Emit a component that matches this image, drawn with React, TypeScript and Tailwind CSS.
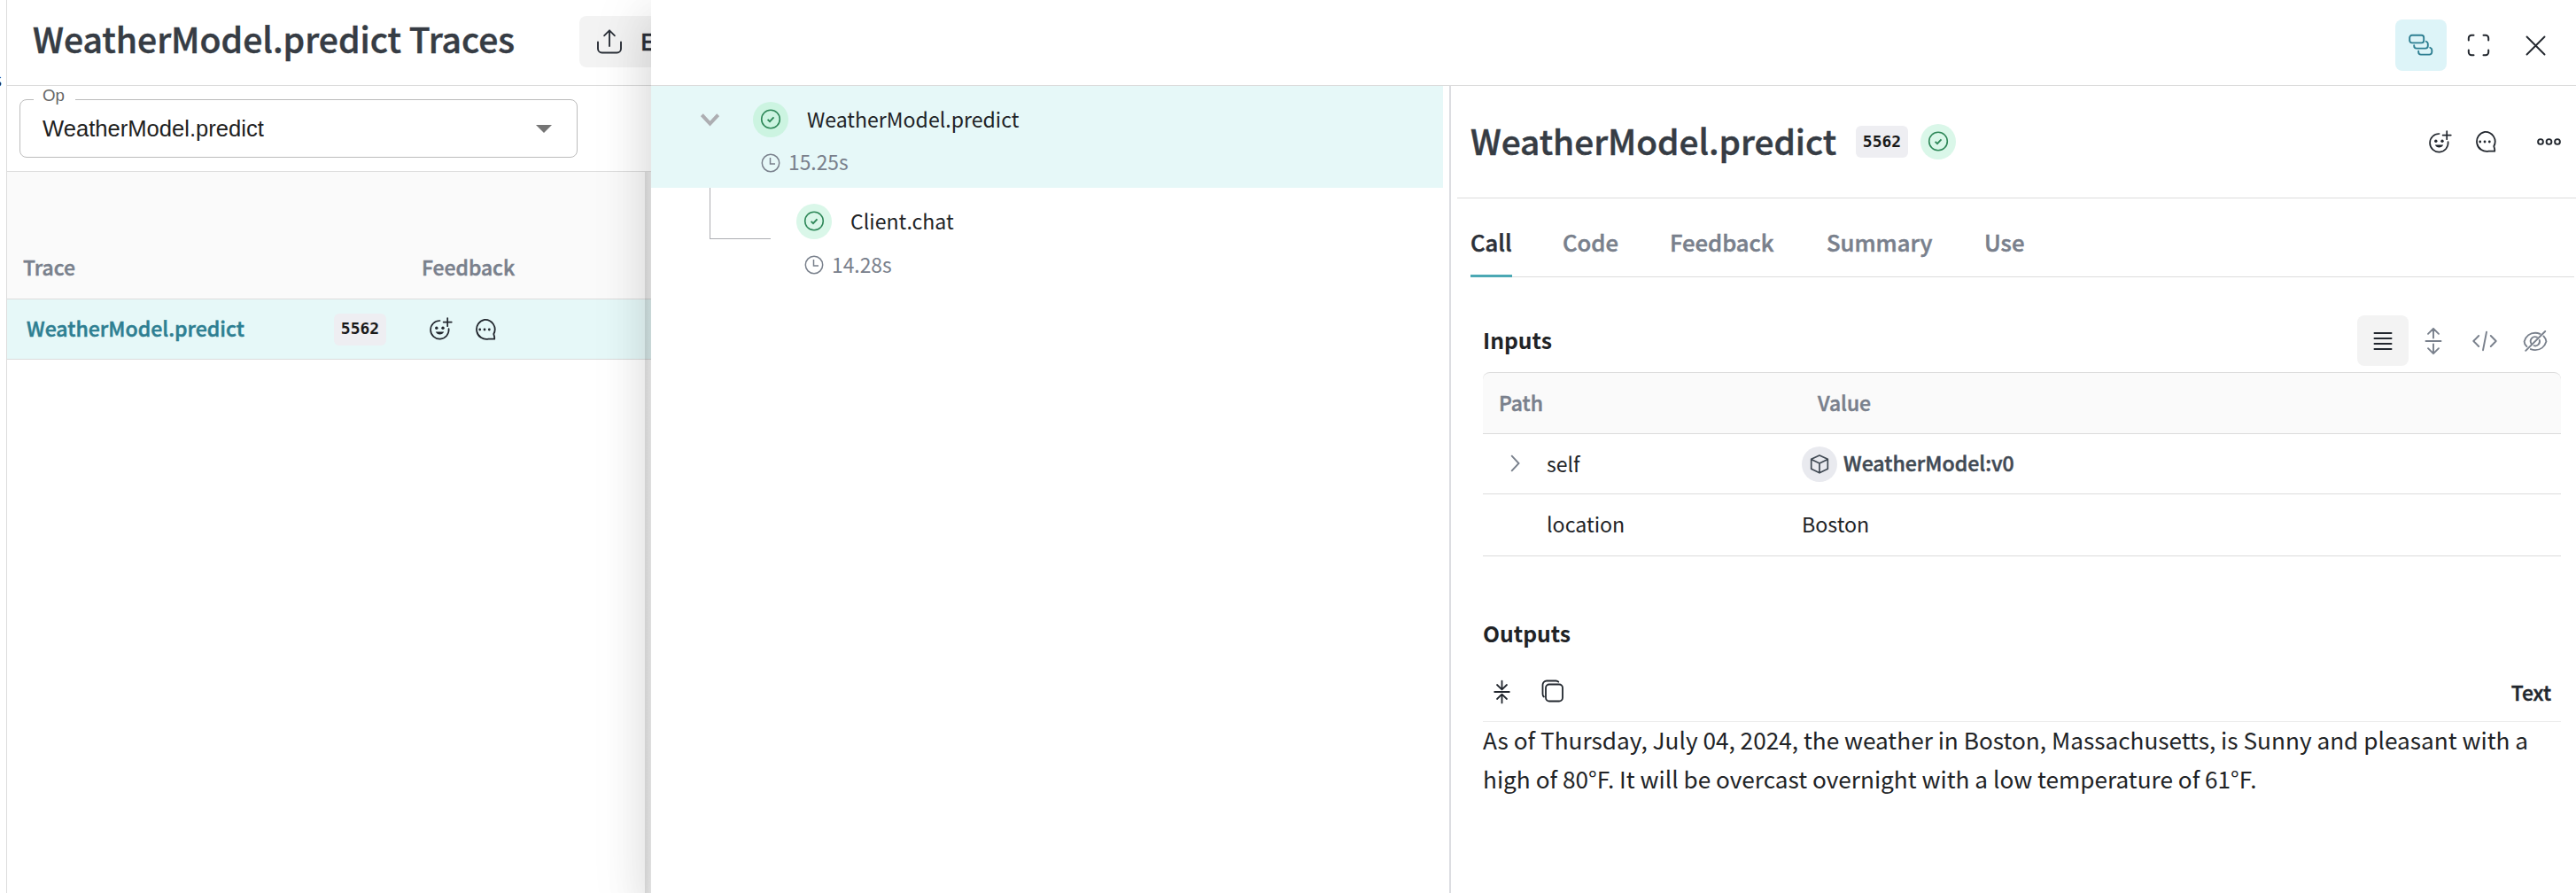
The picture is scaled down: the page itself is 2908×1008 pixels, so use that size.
import React from "react";

type IconProps = { className?: string };

const SANS = "font-['Noto_Sans_CJK_SC','Noto_Sans',sans-serif]";
const SEMI = "font-medium [-webkit-text-stroke:0.5px_currentColor]";

function SmilePlus({ className }: IconProps) {
  return (
    <svg className={className} width="26" height="26" viewBox="0 0 26 26" fill="none" stroke="currentColor" strokeWidth="1.7" strokeLinecap="round">
      <path d="M11.6 4A10.3 10.3 0 1 0 21.6 13.2" />
      <path d="M20.2 1v9.2M15.6 5.6h9.2" />
      <circle cx="7.8" cy="12.2" r="1.7" fill="currentColor" stroke="none" />
      <circle cx="15" cy="12.2" r="1.7" fill="currentColor" stroke="none" />
      <path d="M6.8 16.6h9.4c-.9 2-2.6 3-4.7 3s-3.8-1-4.7-3z" fill="currentColor" stroke="none" />
    </svg>
  );
}

function Chat({ className }: IconProps) {
  return (
    <svg className={className} width="26" height="26" viewBox="0 0 26 26" fill="none" stroke="currentColor" strokeWidth="1.8" strokeLinejoin="round">
      <path d="M13 1.8A11 11 0 1 0 17.4 23.7H24.2V21.5L23.3 18A11 11 0 0 0 13 1.8z" />
      <g fill="currentColor" stroke="none">
        <circle cx="7.7" cy="13" r="1.4" />
        <circle cx="13" cy="13" r="1.4" />
        <circle cx="18.3" cy="13" r="1.4" />
      </g>
    </svg>
  );
}

function Status({ className = "" }: IconProps) {
  return (
    <span className={`flex size-10 shrink-0 items-center justify-center rounded-full text-[#2f8859] ${className}`}>
      <svg width="24" height="24" viewBox="0 0 24 24" fill="none" stroke="currentColor" strokeWidth="1.6">
        <circle cx="12" cy="11.5" r="10.3" />
        <path d="M8.6 11.8l2.4 2.4 4.5-4.9" strokeWidth="1.9" />
      </svg>
    </span>
  );
}

function Clock() {
  return (
    <svg width="22" height="22" viewBox="0 0 22 22" fill="none" stroke="currentColor" strokeWidth="1.5">
      <circle cx="11" cy="11" r="9.7" />
      <path d="M10.5 5v7h5.5" />
    </svg>
  );
}

function Badge() {
  return (
    <span className="flex h-9 w-[59px] shrink-0 items-center justify-center rounded-md bg-[#eeeef2] pb-px font-['DejaVu_Sans_Mono',monospace] text-[18px] leading-none font-bold text-[#1a1a1a]">
      5562
    </span>
  );
}

function TracesPage() {
  return (
    <div className="flex w-[735px] shrink-0 overflow-hidden">
      <div className="flex w-[7px] shrink-0 justify-end overflow-hidden pt-[72px] pr-[5px] text-[22px] leading-8">s</div>
      <main className="flex w-[728px] shrink-0 flex-col border-l border-[#dcdcdc]">
        <header className="flex h-[97px] shrink-0 items-start border-b border-[#dcdcdc] pl-[29px]">
          <h1 className={`mt-[15px] w-[617px] shrink-0 text-[39.1px] leading-[56px] whitespace-nowrap text-[#363c44] ${SEMI}`}>
            WeatherModel.predict Traces
          </h1>
          <button className="mt-[18px] flex h-[58px] w-[180px] shrink-0 items-center rounded-lg bg-[#f3f3f3] pl-[19px] text-[#2b3038]">
            <svg width="30" height="30" viewBox="0 0 30 30" fill="none" stroke="currentColor" strokeWidth="1.9" strokeLinecap="round" strokeLinejoin="round">
              <path d="M15 20V2.5M9.2 8.2L15 2.3l5.8 5.9M2 15.5V23a4.5 4.5 0 0 0 4.5 4.5h17a4.5 4.500 0 0 0 4.5-4.5v-7.5" />
            </svg>
            <span className={`-mt-[3px] ml-5 text-[25px] leading-9 ${SEMI}`}>Export</span>
          </button>
        </header>

        <div className="h-[97px] shrink-0 border-b border-[#dcdcdc] pt-[15px] pl-[14px] font-['Liberation_Sans',sans-serif]">
          <div className="relative flex h-[66px] w-[630px] items-center justify-between rounded-lg border border-[#bcbcbc] pr-7 pl-[25px]">
            <span className="absolute -top-[16px] left-[15px] w-[47px] bg-white pl-[10px] text-[18.7px] leading-[22px] text-[#666]">Op</span>
            <span className="-mt-px text-[25.6px] leading-8 text-[#212121]">WeatherModel.predict</span>
            <svg width="18" height="9" viewBox="0 0 18 9" className="text-[#757575]">
              <path d="M0 0h18L9 9z" fill="currentColor" />
            </svg>
          </div>
        </div>

        <div className="relative flex grow flex-col">
          <div className={`flex h-[144px] shrink-0 items-start border-b border-[#dcdcdc] bg-[#fafafa] pt-[89px] pl-[18px] text-[22.9px] leading-9 text-[#79808c] ${SEMI}`}>
            <span className="w-[450px] shrink-0">Trace</span>
            <span>Feedback</span>
          </div>
          <div className="flex h-[68px] shrink-0 items-center border-b border-[#dcdcdc] bg-[#e6f8f8] pl-[22px] text-[#22272e]">
            <span className={`-mt-[3px] w-[347px] shrink-0 text-[23.1px] leading-9 text-[#2e7f92] ${SEMI}`}>WeatherModel.predict</span>
            <Badge />
            <SmilePlus className="-mt-px ml-[49px]" />
            <Chat className="ml-[23px]" />
          </div>
          <div className="absolute inset-y-0 right-0 w-[7px] bg-linear-to-r from-black/11 to-black/4" />
        </div>
      </main>
    </div>
  );
}

function CallTree() {
  return (
    <div className="w-[901px] shrink-0">
      <div className="flex h-[115px] w-[894px] bg-[#e6f8f8] pl-[56px]">
        <svg className="mt-[31px] mr-[38px] shrink-0 text-[#adaeb2]" width="21" height="15" viewBox="0 0 21 15" fill="none" stroke="currentColor" strokeWidth="4">
          <path d="M1.3 1.7l9.2 9.8 9.2-9.8" />
        </svg>
        <div>
          <div className="mt-[18px] flex h-10 items-center gap-[21px]">
            <Status className="bg-[#ccf4e1]" />
            <span className="-mt-[3px] text-[23.1px] leading-9 text-[#212326]">WeatherModel.predict</span>
          </div>
          <div className="mt-[11px] ml-[9px] flex h-9 items-center gap-[9px] text-[#79808c]">
            <Clock />
            <span className="-mt-[2px] text-[22.8px] leading-9">15.25s</span>
          </div>
        </div>
      </div>
      <div className="flex h-[115px] pl-[66px]">
        <div className="h-[58px] w-[69px] shrink-0 border-b border-l border-[#adaeb2]" />
        <div className="ml-[29px]">
          <div className="mt-[18px] flex h-10 items-center gap-[21px]">
            <Status className="bg-[#daf7e9]" />
            <span className="-mt-[3px] text-[23.1px] leading-9 text-[#212326]">Client.chat</span>
          </div>
          <div className="mt-[11px] ml-[9px] flex h-9 items-center gap-[9px] text-[#79808c]">
            <Clock />
            <span className="text-[22.8px] leading-9">14.28s</span>
          </div>
        </div>
      </div>
    </div>
  );
}

function Inputs() {
  return (
    <section className="w-[1217px]">
      <div className="flex h-[64px] items-start">
        <h2 className="mt-[9px] grow text-[24.7px] leading-9 font-bold text-[#212326]">Inputs</h2>
        <div className="flex items-center text-[#79808c]">
          <span className="flex h-[57px] w-[58px] items-center justify-center rounded-lg bg-[#f3f3f3] text-[#22272e]">
            <svg width="22" height="22" viewBox="0 0 22 22" stroke="currentColor" strokeWidth="2" strokeLinecap="round">
              <path d="M1.500 2h19M1.500 8h19M1.500 14h19M1.500 20h19" />
            </svg>
          </span>
          <svg className="ml-[18px]" width="20" height="32" viewBox="0 0 20 32" fill="none" stroke="currentColor" strokeWidth="1.9" strokeLinecap="round" strokeLinejoin="round">
            <path d="M1.500 16h17M10 12.500V2.300M4 7.800l6-6 6 6M10 19.500v10.200M4 24.200l6 6 6-6" />
          </svg>
          <svg className="ml-[34px]" width="28" height="24" viewBox="0 0 28 24" fill="none" stroke="currentColor" strokeWidth="1.9" strokeLinecap="round" strokeLinejoin="round">
            <path d="M7.200 6L1.300 12l5.900 6M20.800 6l5.900 6-5.900 6M16 1.800l-4 20.400" />
          </svg>
          <svg className="mr-[15px] ml-[29px]" width="28" height="24" viewBox="0 0 28 24" fill="none" stroke="currentColor" strokeWidth="1.9" strokeLinecap="round">
            <path d="M25.200 1L3.200 22.800M4.400 18.200C2.500 16.300 1.600 13.800 1.600 12.400c1.800-6.200 6.800-9.700 12.400-9.700 1.900 0 3.700.4 5.300 1.100M23.400 6.400c1.700 1.800 2.700 4 3 6-1.800 6.200-6.800 9.700-12.400 9.700-1.800 0-3.500-.4-5.100-1" />
            <path d="M9.600 15a5 5 0 0 1 6.300-7.300M18.800 11a5 5 0 0 1-6.200 6.200" />
          </svg>
        </div>
      </div>
      <div className={`flex h-[70px] items-center rounded-t-lg border-y border-[#dcdcdc] bg-[#fafafa] pl-[18px] text-[22.9px] leading-9 text-[#79808c] ${SEMI}`}>
        <span className="w-[360px] -translate-y-px">Path</span>
        <span className="-translate-y-px">Value</span>
      </div>
      <div className="flex h-[68px] items-center border-b border-[#dcdcdc] pl-[31px] text-[23px] leading-9 text-[#212326]">
        <svg className="-mt-px shrink-0 text-[#79808c]" width="11" height="20" viewBox="0 0 11 20" fill="none" stroke="currentColor" strokeWidth="1.9">
          <path d="M1.200 1.200l8.300 8.800-8.300 8.800" />
        </svg>
        <span className="-mt-px ml-[30px] w-[288px] shrink-0">self</span>
        <span className="flex size-10 items-center justify-center rounded-full bg-[#e9eaef] text-[#414a54]">
          <svg width="24" height="24" viewBox="0 0 24 24" fill="none" stroke="currentColor" strokeWidth="1.7" strokeLinejoin="round">
            <path d="M12 2l9.300 4.300v11L12 21.800l-9.300-4.500v-11zM2.700 6.500L12 11l9.300-4.500M12 11v10.800" />
          </svg>
        </span>
        <span className={`-mt-[4px] ml-[7px] ${SEMI} text-[23.1px] text-[#414a54]`}>WeatherModel:v0</span>
      </div>
      <div className="flex h-[70px] items-center border-b border-[#dcdcdc] pb-[3px] pl-[72px] text-[23.2px] leading-9 text-[#212326]">
        <span className="w-[288px] shrink-0">location</span>
        <span>Boston</span>
      </div>
    </section>
  );
}

function Outputs() {
  return (
    <section className="mt-[68px] w-[1217px]">
      <h2 className="text-[24.7px] leading-9 font-bold text-[#212326]">Outputs</h2>
      <div className="mt-[26px] flex h-[57px] items-start border-b border-[#ebebeb] text-[#22272e]">
        <svg className="mt-[8px] ml-3" width="19" height="30" viewBox="0 0 19 30" fill="none" stroke="currentColor" strokeWidth="1.8" strokeLinecap="round" strokeLinejoin="round">
          <path d="M1.200 15h16.600M9.500 2.600v9.200M4 7l5.500 5.300L15 7M9.500 27.400v-9.200M4 23l5.500-5.300L15 23" />
        </svg>
        <svg className="mt-[9px] ml-[35px]" width="26" height="26" viewBox="0 0 26 26" fill="none" stroke="currentColor" strokeWidth="1.8" strokeLinecap="round">
          <rect x="5" y="5.500" width="19" height="19" rx="4" />
          <path d="M2.900 19.500a4 4 0 0 1-1.400-3V6a4.500 4.500 0 0 1 4.500-4.500H16.500a4 4 0 0 1 2.800 1.200" />
        </svg>
        <span className={`mt-[6px] mr-[11px] ml-auto text-[22.8px] leading-9 ${SEMI}`}>Text</span>
      </div>
      <p className="-mt-[2px] text-[26.19px] leading-[44px] whitespace-nowrap text-[#212326]">
        As of Thursday, July 04, 2024, the weather in Boston, Massachusetts, is Sunny and pleasant with a
        <br />
        high of 80°F. It will be overcast overnight with a low temperature of 61°F.
      </p>
    </section>
  );
}

function CallDetails() {
  return (
    <div className="flex grow flex-col border-l-2 border-[#dcdde1] pl-[7px]">
      <div className="flex h-[127px] items-center border-b border-[#dcdcdc] pl-[15px] text-[#22272e]">
        <h1 className={`-mt-[5px] w-[435px] shrink-0 text-[38.8px] leading-[56px] text-[#363c44] ${SEMI}`}>WeatherModel.predict</h1>
        <Badge />
        <Status className="ml-[14px] bg-[#daf7e9]" />
        <div className="mr-[17px] ml-auto flex items-center">
          <SmilePlus className="mr-[24px]" />
          <Chat className="mr-[46px]" />
          <svg width="27" height="10" viewBox="0 0 27 10" fill="none" stroke="currentColor" strokeWidth="1.9">
            <circle cx="4" cy="5" r="2.9" />
            <circle cx="13.5" cy="5" r="2.9" />
            <circle cx="23" cy="5" r="2.9" />
          </svg>
        </div>
      </div>
      <nav className={`mr-[2px] ml-[15px] flex h-[89px] shrink-0 items-stretch border-b border-[#dcdcdc] text-[25.6px] leading-9 text-[#79808c] ${SEMI}`}>
        <span className="mr-[57px] h-[89px] w-[47px] border-b-3 border-[#4ba8b4] pt-[31px] text-[#2b3038]">Call</span>
        <span className="w-[121px] pt-[31px]">Code</span>
        <span className="w-[177px] pt-[31px]">Feedback</span>
        <span className="w-[178px] pt-[31px]">Summary</span>
        <span className="pt-[31px]">Use</span>
      </nav>
      <div className="pt-[43px] pl-[29px]">
        <Inputs />
        <Outputs />
      </div>
    </div>
  );
}

export default function App() {
  return (
    <div className={`flex h-[1008px] w-[2908px] overflow-hidden bg-white text-[#22272e] ${SANS}`}>
      <TracesPage />
      <aside className="relative z-10 flex w-[2173px] shrink-0 flex-col bg-white shadow-[0_32px_48px_4px_rgba(0,0,0,0.09),0_12px_60px_10px_rgba(0,0,0,0.08)]">
        <div className="flex h-[97px] shrink-0 items-start justify-end border-b border-[#dcdcdc] pt-[22px] pr-[34px] text-[#22272e]">
          <span className="flex size-[58px] items-center justify-center rounded-lg bg-[#ddf4f8] text-[#2e7f92]">
            <svg width="28" height="26" viewBox="0 0 28 26" fill="none" stroke="currentColor" strokeWidth="1.9" strokeLinecap="round">
              <rect x="1.200" y="1.800" width="16" height="8.600" rx="2.600" />
              <path d="M6.200 13.200v.6a2.800 2.800 0 0 0 2.800 2.800h10a2.800 2.800 0 0 0 2.800-2.800v-2.400a2.800 2.800 0 0 0-2-2.600M11.200 19.800v1a2.800 2.800 0 0 0 2.800 2.800h9.500a2.800 2.800 0 0 0 2.800-2.800v-2.400a2.800 2.800 0 0 0-2-2.600" />
            </svg>
          </span>
          <svg className="mt-4 ml-[23px]" width="26" height="26" viewBox="0 0 26 26" fill="none" stroke="currentColor" strokeWidth="2" strokeLinecap="round">
            <path d="M1.800 7.500V5a3.200 3.200 0 0 1 3.200-3.200h2.500M18.500 1.800H21A3.200 3.200 0 0 1 24.200 5v2.500M24.200 18.500V21a3.200 3.200 0 0 1-3.200 3.200h-2.500M7.500 24.200H5A3.200 3.200 0 0 1 1.800 21v-2.500" />
          </svg>
          <svg className="mt-[18px] ml-10" width="23" height="23" viewBox="0 0 23 23" fill="none" stroke="currentColor" strokeWidth="1.9" strokeLinecap="round">
            <path d="M1.500 1.500l20 20M21.500 1.500l-20 20" />
          </svg>
        </div>
        <div className="flex grow">
          <CallTree />
          <CallDetails />
        </div>
      </aside>
    </div>
  );
}
